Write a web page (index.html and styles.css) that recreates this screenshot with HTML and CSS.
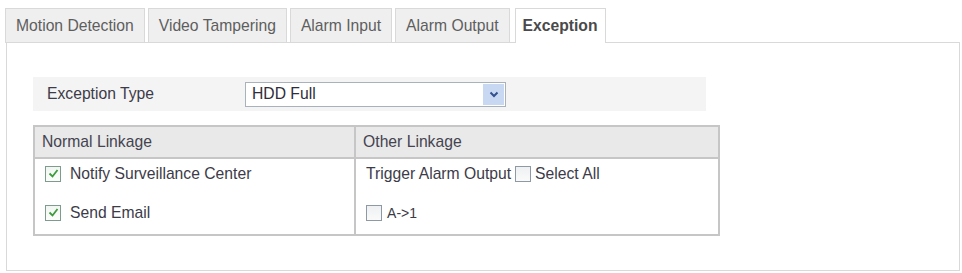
FILE: index.html
```html
<!DOCTYPE html>
<html>
<head>
<meta charset="utf-8">
<link rel="stylesheet" href="styles.css">
</head>
<body>
<div class="page">
  <div class="tabs">
    <div class="tab">Motion Detection</div>
    <div class="tab">Video Tampering</div>
    <div class="tab">Alarm Input</div>
    <div class="tab">Alarm Output</div>
    <div class="tab active">Exception</div>
  </div>
  <div class="panel">
    <div class="type-row">
      <span class="type-label">Exception Type</span>
      <div class="select">
        <span class="select-value">HDD Full</span>
        <span class="select-arrow">
          <svg width="10" height="7" viewBox="0 0 10 7"><path d="M1.5 1.5 L5 5 L8.5 1.5" fill="none" stroke="#33508f" stroke-width="2"/></svg>
        </span>
      </div>
    </div>
    <table class="linkage">
      <colgroup><col class="col-left"><col class="col-right"></colgroup>
      <thead>
        <tr><th>Normal Linkage</th><th>Other Linkage</th></tr>
      </thead>
      <tbody>
        <tr>
          <td>
            <div class="item"><span class="cb checked"><svg width="13" height="13" viewBox="0 0 13 13"><path d="M2.5 6.5 L5.5 9.5 L10.5 3" fill="none" stroke="#3d9a3d" stroke-width="1.8"/></svg></span><span class="label">Notify Surveillance Center</span></div>
            <div class="item"><span class="cb checked"><svg width="13" height="13" viewBox="0 0 13 13"><path d="M2.5 6.5 L5.5 9.5 L10.5 3" fill="none" stroke="#3d9a3d" stroke-width="1.8"/></svg></span><span class="label">Send Email</span></div>
          </td>
          <td>
            <div class="item"><span class="label">Trigger Alarm Output</span><span class="cb mid"></span><span class="label">Select All</span></div>
            <div class="item"><span class="cb"></span><span class="label small">A-&gt;1</span></div>
          </td>
        </tr>
      </tbody>
    </table>
  </div>
</div>
</body>
</html>
```
FILE: styles.css
```css
html, body {
  margin: 0;
  padding: 0;
  background: #fff;
}
body {
  font-family: "Liberation Sans", Arial, sans-serif;
  font-size: 15.7px;
  color: #3c3b48;
}
.page {
  padding: 8px 2px 0 5px;
}
.tabs {
  display: flex;
  gap: 3px;
  height: 34px;
  border-bottom: 1px solid #d9d9d9;
}
.tab {
  box-sizing: border-box;
  height: 34px;
  line-height: 33px;
  padding: 0 10px;
  border: 1px solid #d9d9d9;
  border-bottom: none;
  background: #efefef;
  color: #5e5e5e;
  white-space: nowrap;
}
.tab.active {
  height: 35px;
  margin-bottom: -1px;
  margin-left: 2px;
  padding: 0 7px;
  background: #fff;
  font-weight: bold;
  color: #4a4a4a;
}
.panel {
  box-sizing: border-box;
  margin-left: 1px;
  height: 228px;
  border: 1px solid #d9d9d9;
  border-top: none;
  padding: 34px 0 0 26px;
}
.type-row {
  display: flex;
  align-items: center;
  width: 673px;
  height: 34px;
  background: #f4f4f4;
}
.type-label {
  box-sizing: border-box;
  width: 212px;
  padding-left: 14px;
}
.select {
  box-sizing: border-box;
  display: flex;
  align-items: center;
  justify-content: space-between;
  width: 261px;
  height: 25px;
  border: 1px solid #a9b2bc;
  background: #fff;
  padding-left: 6px;
}
.select-value {
  color: #2e2d3a;
}
.select-arrow {
  display: flex;
  align-items: center;
  justify-content: center;
  width: 21px;
  height: 21px;
  margin-right: 1px;
  background: #c8d8f2;
}
.linkage {
  margin-top: 14px;
  width: 687px;
  border-collapse: collapse;
  border: 2px solid #c6c6c6;
}
.col-left { width: 322px; }
.col-right { width: 365px; }
.linkage th {
  height: 30px;
  padding: 0 7px;
  background: #e9e9e9;
  border: 2px solid #c6c6c6;
  text-align: left;
  font-weight: normal;
  color: #444350;
}
.linkage td {
  vertical-align: top;
  padding: 0 10px 7px;
  border: 2px solid #c6c6c6;
}
.item {
  display: flex;
  align-items: center;
  height: 29px;
}
.item + .item {
  margin-top: 10px;
}
.cb {
  box-sizing: border-box;
  display: inline-flex;
  align-items: center;
  justify-content: center;
  width: 16px;
  height: 16px;
  border: 1px solid #8d9aa6;
  background: linear-gradient(#eef0f2, #fafafa);
  margin-right: 5px;
}
.cb.checked {
  border-color: #7f9a8e;
  background: linear-gradient(#f2f6f2, #fbfdfb);
  margin-right: 9px;
}
.cb.mid {
  margin: 0 4px;
}
.label.small {
  font-size: 14px;
}
```
